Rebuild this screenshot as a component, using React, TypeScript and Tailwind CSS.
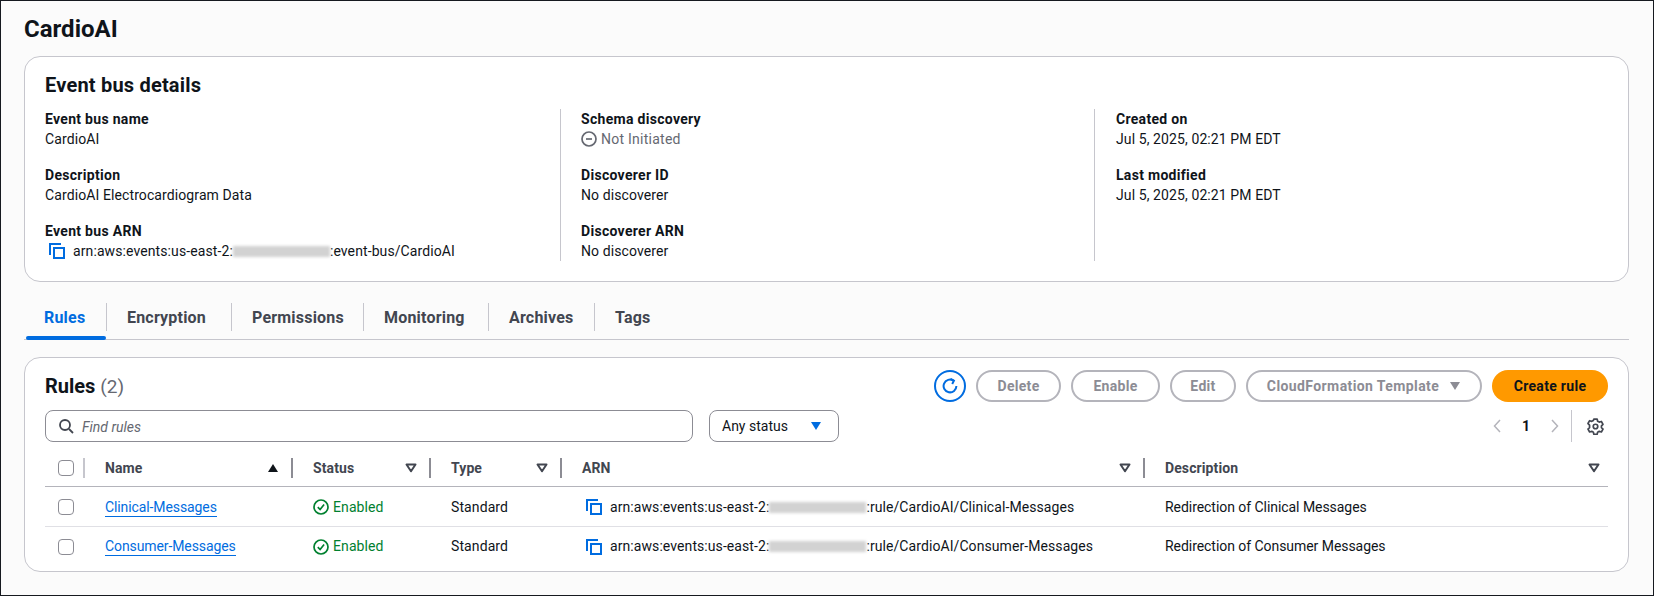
import React from "react";

const Copy = () => (
  <svg width="16" height="16" viewBox="0 0 16 16" fill="none" stroke="#006ce0" strokeWidth="2" className="shrink-0">
    <path d="M1 12V1h11" />
    <rect x="5" y="5" width="10" height="10" />
  </svg>
);

const Redacted = () => (
  <span className="inline-block w-[97px] h-[11px] bg-[#d2d2d2] blur-[1.5px] align-[-1px]" />
);

const Filter = () => (
  <svg width="12" height="10" viewBox="0 0 12 10" fill="none" stroke="#424650" strokeWidth="2" className="shrink-0">
    <path d="M1.5 1.5h9L6 8.2z" strokeLinejoin="round" />
  </svg>
);

const Check = () => (
  <span className="block w-4 h-4 rounded-[4px] border border-[#8c8c94] bg-white" />
);

const Ok = () => (
  <svg width="16" height="16" viewBox="0 0 16 16" fill="none" stroke="#00802f" strokeWidth="1.7" className="shrink-0">
    <circle cx="8" cy="8" r="7" />
    <path d="M4.8 8.2l2.3 2.3 4-5" />
  </svg>
);

const Item = ({ label, children }: { label: string; children: React.ReactNode }) => (
  <div className="h-[56px]">
    <div className="font-bold leading-5 text-[#0f141a] tracking-[0.3px]">{label}</div>
    <div className="leading-5 flex items-center text-[#0f141a] tracking-[0.1px]">{children}</div>
  </div>
);

const Sep = () => <span className="w-[2px] h-5 bg-[#8c8c94] shrink-0" />;

const tabs = [
  ["Rules", "w-[81px] ml-[2px] pl-[18px]"],
  ["Encryption", "w-[125px] pl-[20px]"],
  ["Permissions", "w-[132px] pl-[20px]"],
  ["Monitoring", "w-[125px] pl-[20px]"],
  ["Archives", "w-[106px] pl-[20px]"],
  ["Tags", "w-[80px] pl-[20px]"],
];

const Head = ({ w, label, sep = true, icon }: { w: string; label: string; sep?: boolean; icon?: React.ReactNode }) => (
  <div className={`${w} flex items-center`}>
    <span className="font-bold text-[#424650] pl-[20px] tracking-[0.1px]">{label}</span>
    <span className={`ml-auto ${sep ? "mr-[12px]" : "mr-[8px]"}`}>{icon ?? <Filter />}</span>
    {sep && <Sep />}
  </div>
);

const rows = [
  ["Clinical-Messages", "Clinical-Messages", "Redirection of Clinical Messages"],
  ["Consumer-Messages", "Consumer-Messages", "Redirection of Consumer Messages"],
];

export default function App() {
  return (
    <div className="h-[596px] w-[1654px] border border-[#16191f] bg-[#fbfbfb] font-['Roboto',sans-serif] text-[14px] text-[#0f141a] pl-[23px] pr-[24px] overflow-hidden">
      <h1 className="text-[24px] leading-[30px] font-bold mt-[13px]">CardioAI</h1>

      <section className="mt-[12px] h-[226px] rounded-[16px] border border-[#c6c6cd] bg-white px-[20px] pt-[16px]">
        <h2 className="text-[20px] leading-[24px] font-bold tracking-[0.2px]">Event bus details</h2>
        <div className="mt-[12px] grid grid-cols-[515px_534px_1fr]">
          <div>
            <Item label="Event bus name">CardioAI</Item>
            <Item label="Description">CardioAI Electrocardiogram Data</Item>
            <Item label="Event bus ARN">
              <span className="ml-[4px] mr-[8px]"><Copy /></span>
              <span>arn:aws:events:us-east-2:<Redacted />:event-bus/CardioAI</span>
            </Item>
          </div>
          <div className="border-l border-[#c6c6cd] pl-[20px] h-[152px]">
            <Item label="Schema discovery">
              <span className="text-[#656871] flex items-center gap-[4px] tracking-[0.25px]">
                <svg width="16" height="16" viewBox="0 0 16 16" fill="none" stroke="#656871" strokeWidth="1.7">
                  <circle cx="8" cy="8" r="7" />
                  <path d="M5 8h6" />
                </svg>
                Not Initiated
              </span>
            </Item>
            <Item label="Discoverer ID">No discoverer</Item>
            <Item label="Discoverer ARN">No discoverer</Item>
          </div>
          <div className="border-l border-[#c6c6cd] pl-[21px] h-[152px]">
            <Item label="Created on">Jul 5, 2025, 02:21 PM EDT</Item>
            <Item label="Last modified">Jul 5, 2025, 02:21 PM EDT</Item>
          </div>
        </div>
      </section>

      <nav className="mt-[21px] h-[37px] border-b border-[#c6c6cd] flex items-start">
        {tabs.map(([t, cls], i) => (
          <div
            key={t}
            className={`relative h-[28px] flex items-center pt-[1px] font-bold text-[16px] tracking-[0.2px] ${cls} ${i === 0 ? "text-[#006ce0]" : "text-[#424650]"} ${i < tabs.length - 1 ? "border-r border-[#c6c6cd]" : ""}`}
          >
            {t}
            {i === 0 && <span className="absolute left-0 right-0 top-[33px] h-[4px] rounded-[2px] bg-[#006ce0]" />}
          </div>
        ))}
      </nav>

      <section className="mt-[17px] h-[215px] rounded-[16px] border border-[#c6c6cd] bg-white px-[20px] pt-[12px]">
        <div className="flex items-center h-[32px]">
          <h2 className="text-[20px] font-bold">Rules <span className="font-normal text-[19px] text-[#656871]">(2)</span></h2>
          <div className="ml-auto flex items-center gap-[10px]">
            <button className="w-[32px] h-[32px] rounded-full border-2 border-[#006ce0] flex items-center justify-center">
              <svg width="16" height="16" viewBox="0 0 16 16" fill="none" stroke="#006ce0" strokeWidth="2">
                <path d="M11.5 2.6A6.4 6.4 0 1 0 14.4 8" />
                <path d="M8.5 1l3.4 1.7L10.2 6" />
              </svg>
            </button>
            {[
              ["Delete", "w-[85px]"],
              ["Enable", "w-[89px]"],
              ["Edit", "w-[66px]"],
            ].map(([t, w]) => (
              <button key={t} className={`${w} h-[32px] rounded-full border-2 border-[#b4b4bb] font-bold text-[#8c8c94] tracking-[0.3px]`}>{t}</button>
            ))}
            <button className="w-[236px] h-[32px] rounded-full border-2 border-[#b4b4bb] font-bold text-[#8c8c94] flex items-center justify-center gap-[10px] tracking-[0.4px]">
              CloudFormation Template
              <svg width="12" height="10" viewBox="0 0 12 10" fill="#8c8c94"><path d="M1 1h10L6 9z" /></svg>
            </button>
            <button className="w-[116px] h-[32px] rounded-full bg-[#ff9900] font-bold text-[#0f141a] tracking-[0.3px]">Create rule</button>
          </div>
        </div>

        <div className="flex items-center h-[32px] mt-[8px]">
          <div className="w-[648px] h-[32px] rounded-[8px] border border-[#8c8c94] flex items-center pl-[12px] gap-[8px]">
            <svg width="16" height="16" viewBox="0 0 16 16" fill="none" stroke="#424650" strokeWidth="1.8">
              <circle cx="7" cy="7" r="5" />
              <path d="M11 11l4 4" />
            </svg>
            <span className="italic text-[#656871] pt-[2px]">Find rules</span>
          </div>
          <div className="ml-[16px] w-[130px] h-[32px] rounded-[8px] border border-[#8c8c94] flex items-center justify-between pl-[12px] pr-[16px]">
            <span className="pt-[1px]">Any status</span>
            <svg width="12" height="10" viewBox="0 0 12 10" fill="#006ce0"><path d="M1 1h10L6 9z" /></svg>
          </div>
          <div className="ml-auto flex items-center h-[32px]">
            <svg width="16" height="16" viewBox="0 0 16 16" fill="none" stroke="#b4b4bb" strokeWidth="1.5"><path d="M10 2L4.5 8l5.500 6" /></svg>
            <span className="w-[40px] text-center font-bold">1</span>
            <svg width="16" height="16" viewBox="0 0 16 16" fill="none" stroke="#b4b4bb" strokeWidth="1.5"><path d="M6 2l5.5 6L6 14" /></svg>
            <span className="ml-[9px] w-px h-[32px] bg-[#c6c6cd]" />
            <span className="ml-[15px] mr-[4px]">
              <svg width="17" height="17" viewBox="0 0 24 24" fill="none" stroke="#424650" strokeWidth="2.4" strokeLinejoin="round">
                <path d="M9.7 2.5h4.6l.7 3 2.3 1.3 3-.9 2.3 4-2.2 2.1v2.6l2.2 2.1-2.3 4-3-.9-2.3 1.3-.7 3H9.700l-.7-3-2.3-1.300-3 .9-2.300-4 2.200-2.100V10.900L1.400 8.800l2.300-4 3 .9L9 4.400z" transform="translate(0 -1)" />
                <circle cx="12" cy="12" r="3.200" />
              </svg>
            </span>
          </div>
        </div>

        <div className="mt-[8px] h-[37px] border-b border-[#b4b4bb] flex items-center">
          <div className="w-[40px] flex items-center pl-[13px] justify-between">
            <Check />
            <span className="w-[2px] h-5 bg-[#c6c6cd] ml-[8px]" />
          </div>
          <Head w="w-[208px]" label="Name" icon={<svg width="12" height="10" viewBox="0 0 12 10" fill="#0f141a"><path d="M6 1l5 8H1z" /></svg>} />
          <Head w="w-[138px]" label="Status" />
          <Head w="w-[131px]" label="Type" />
          <Head w="w-[583px]" label="ARN" />
          <Head w="flex-1" label="Description" sep={false} />
        </div>

        {rows.map((r, i) => (
          <div key={r[0]} className={`h-[40px] flex items-center ${i === 0 ? "border-b border-[#e0e0e5] pt-[1px]" : "pb-[1px]"}`}>
            <div className="w-[40px] pl-[13px]"><Check /></div>
            <div className="w-[208px] pl-[20px]">
              <span className="text-[#006ce0] border-b border-[#006ce0] leading-[17px] inline-block tracking-[-0.1px]">{r[0]}</span>
            </div>
            <div className="w-[138px] pl-[20px] flex items-center gap-[4px] text-[#00802f] tracking-[0.1px]"><Ok /> Enabled</div>
            <div className="w-[131px] pl-[20px] tracking-[0.1px]">Standard</div>
            <div className="w-[583px] pl-[24px] flex items-center gap-[8px] tracking-[0.08px]">
              <Copy />
              <span>arn:aws:events:us-east-2:<Redacted />:rule/CardioAI/{r[1]}</span>
            </div>
            <div className="flex-1 pl-[20px] tracking-[-0.05px]">{r[2]}</div>
          </div>
        ))}
      </section>
    </div>
  );
}
